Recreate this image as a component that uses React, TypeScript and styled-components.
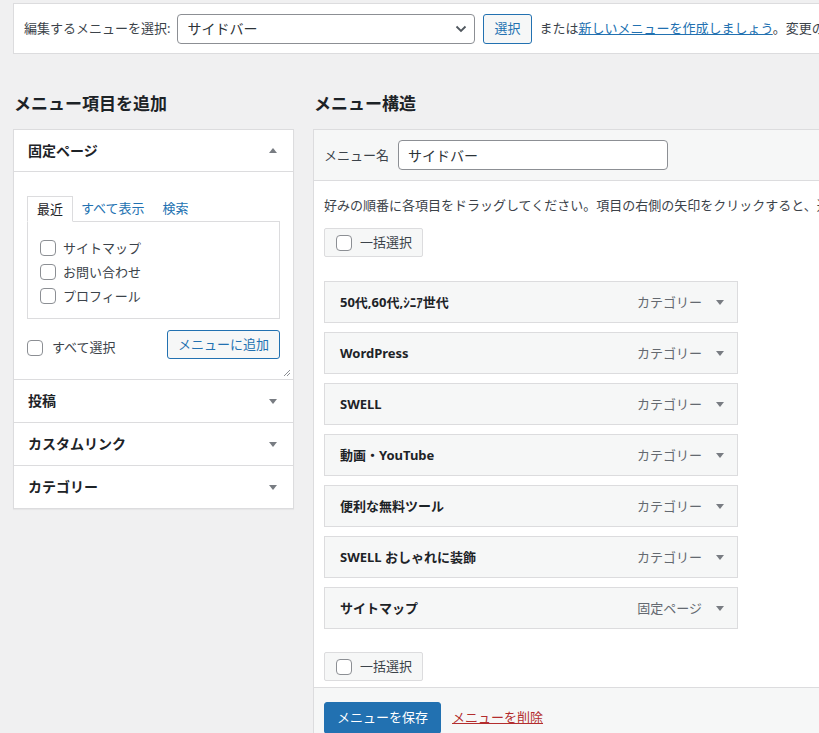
import React from 'react';
import styled, { createGlobalStyle, css } from 'styled-components';

const GlobalStyle = createGlobalStyle`
  html, body {
    margin: 0;
    padding: 0;
    background: #f0f0f1;
    overflow: hidden;
  }
  body {
    font-family: "Noto Sans", "Noto Sans CJK JP", sans-serif;
    font-size: 13px;
    line-height: 1.4;
    color: #3c434a;
  }
  * {
    box-sizing: border-box;
  }
`;

const Page = styled.div`
  width: 1200px;
  padding: 3px 0 0 13px;
`;

const ManageBar = styled.div`
  display: flex;
  align-items: center;
  gap: 8px;
  height: 51px;
  padding: 0 10px;
  background: #fff;
  border: 1px solid #dcdcde;
  white-space: nowrap;
`;

const BarLabel = styled.span`
  margin-right: -1px;
`;

const SelectWrap = styled.div`
  position: relative;
  width: 298px;
  height: 30px;
`;

const Select = styled.select`
  appearance: none;
  width: 100%;
  height: 100%;
  padding: 0 24px 0 9px;
  border: 1px solid #8c8f94;
  border-radius: 4px;
  background: #fff;
  color: #2c3338;
  font: inherit;
  font-size: 14px;
`;

const Chevron = styled.svg`
  position: absolute;
  right: 8px;
  top: 11px;
  pointer-events: none;
`;

const SecondaryButton = styled.button<{ $height?: number }>`
  height: ${(p) => p.$height ?? 30}px;
  padding: 0 10px;
  border: 1px solid #2271b1;
  border-radius: 3px;
  background: #f6f7f7;
  color: #2271b1;
  font: inherit;
  font-size: 13px;
  line-height: 1;
  cursor: pointer;
`;

const Link = styled.a<{ $danger?: boolean }>`
  color: ${(p) => (p.$danger ? '#b32d2e' : '#2271b1')};
  text-decoration: underline;
  cursor: pointer;
`;

const Columns = styled.div`
  display: flex;
  gap: 19px;
  align-items: flex-start;
`;

const LeftColumn = styled.div`
  width: 281px;
  flex: none;
`;

const RightColumn = styled.div`
  width: 800px;
  flex: none;
`;

const Heading = styled.h2`
  margin: 37px 0 12px 1px;
  height: 26px;
  font-size: 17px;
  line-height: 26px;
  font-weight: 700;
  color: #1d2327;
`;

const Accordion = styled.div`
  background: #fff;
  border: 1px solid #dcdcde;
  box-shadow: 0 1px 1px rgba(0, 0, 0, 0.04);
`;

const Section = styled.div<{ $last?: boolean }>`
  ${(p) =>
    !p.$last &&
    css`
      border-bottom: 1px solid #dcdcde;
    `}
`;

const SectionTitle = styled.div<{ $open?: boolean }>`
  display: flex;
  align-items: center;
  justify-content: space-between;
  height: 42px;
  padding: 0 16px 0 14px;
  font-size: 14px;
  font-weight: 700;
  color: #1d2327;
  ${(p) =>
    p.$open &&
    css`
      border-bottom: 1px solid #dcdcde;
    `}
`;

const Triangle = styled.span<{ $up?: boolean }>`
  width: 0;
  height: 0;
  border-left: 4px solid transparent;
  border-right: 4px solid transparent;
  ${(p) =>
    p.$up
      ? css`
          border-bottom: 5px solid #787c82;
        `
      : css`
          border-top: 5px solid #787c82;
        `}
`;

const SectionBody = styled.div`
  position: relative;
  height: 207px;
  padding: 24px 13px 0;
`;

const Tabs = styled.div`
  display: flex;
  height: 25px;
`;

const Tab = styled.span<{ $active?: boolean }>`
  display: flex;
  align-items: center;
  padding: 0 9px;
  color: #2271b1;
  ${(p) =>
    p.$active &&
    css`
      color: #1d2327;
      background: #fff;
      border: 1px solid #dcdcde;
      border-bottom-color: #fff;
      position: relative;
      z-index: 1;
      margin-bottom: -1px;
      margin-right: -1px;
      height: 26px;
    `}
`;

const TabPanel = styled.div`
  height: 98px;
  border: 1px solid #dcdcde;
  padding: 14px 12px 10px;
`;

const CheckRow = styled.label`
  display: flex;
  align-items: center;
  gap: 7px;
  height: 24px;
  color: #3c434a;
`;

const Checkbox = styled.input.attrs({ type: 'checkbox' })`
  appearance: none;
  width: 16px;
  height: 16px;
  margin: 0;
  border: 1px solid #8c8f94;
  border-radius: 4px;
  background: #fff;
  flex: none;
`;

const AddRow = styled.div`
  display: flex;
  align-items: center;
  justify-content: space-between;
  margin-top: 11px;
`;

const SelectAll = styled.label`
  display: flex;
  align-items: center;
  gap: 9px;
  margin-top: 6px;
`;

const ResizeHandle = styled.svg`
  position: absolute;
  right: 2px;
  bottom: 2px;
`;

const Structure = styled.div`
  background: #fff;
  border: 1px solid #dcdcde;
`;

const StructureHeader = styled.div`
  display: flex;
  align-items: center;
  gap: 9px;
  height: 51px;
  padding: 0 10px;
  background: #f6f7f7;
  border-bottom: 1px solid #dcdcde;
`;

const NameInput = styled.input`
  width: 270px;
  height: 30px;
  padding: 0 9px;
  border: 1px solid #8c8f94;
  border-radius: 4px;
  background: #fff;
  color: #2c3338;
  font: inherit;
  font-size: 14px;
`;

const StructureBody = styled.div`
  padding: 0 10px 6px;
`;

const Instructions = styled.p`
  margin: 14px 0 13px;
  line-height: 20px;
  white-space: nowrap;
`;

const BulkBox = styled.label<{ $top?: number }>`
  display: inline-flex;
  align-items: center;
  gap: 8px;
  height: 29px;
  padding: 0 10px 0 11px;
  margin-top: ${(p) => p.$top ?? 0}px;
  background: #f6f7f7;
  border: 1px solid #dcdcde;
  border-radius: 2px;
`;

const ItemList = styled.ul`
  list-style: none;
  margin: 24px 0 0;
  padding: 0;
  display: flex;
  flex-direction: column;
  gap: 9px;
  width: 414px;
`;

const Item = styled.li`
  display: flex;
  align-items: center;
  height: 42px;
  padding: 0 13px 0 15px;
  background: #f6f7f7;
  border: 1px solid #dcdcde;
`;

const ItemTitle = styled.span`
  flex: 1;
  font-weight: 700;
  color: #1d2327;
`;

const ItemType = styled.span`
  color: #646970;
  margin-right: 14px;
`;

const StructureFooter = styled.div`
  display: flex;
  align-items: center;
  gap: 11px;
  padding: 10px;
  height: 60px;
  background: #f6f7f7;
  border-top: 1px solid #dcdcde;
`;

const PrimaryButton = styled.button`
  height: 32px;
  padding: 0 12px;
  border: 1px solid #2271b1;
  border-radius: 3px;
  background: #2271b1;
  color: #fff;
  font: inherit;
  font-size: 13px;
  cursor: pointer;
`;

const pages = ['サイトマップ', 'お問い合わせ', 'プロフィール'];

const menuItems = [
  { title: '50代,60代,ｼﾆｱ世代', type: 'カテゴリー' },
  { title: 'WordPress', type: 'カテゴリー' },
  { title: 'SWELL', type: 'カテゴリー' },
  { title: '動画・YouTube', type: 'カテゴリー' },
  { title: '便利な無料ツール', type: 'カテゴリー' },
  { title: 'SWELL おしゃれに装飾', type: 'カテゴリー' },
  { title: 'サイトマップ', type: '固定ページ' },
];

const closedSections = ['投稿', 'カスタムリンク', 'カテゴリー'];

const App = () => {
  return (
    <>
      <GlobalStyle />
      <Page>
        <ManageBar>
          <BarLabel>編集するメニューを選択:</BarLabel>
          <SelectWrap>
            <Select defaultValue="sidebar">
              <option value="sidebar">サイドバー</option>
            </Select>
            <Chevron width="12" height="8" viewBox="0 0 12 8">
              <path d="M1.5 1.5l4.5 4.5 4.5-4.5" fill="none" stroke="#50575e" strokeWidth="1.8" />
            </Chevron>
          </SelectWrap>
          <SecondaryButton>選択</SecondaryButton>
          <span>
            または<Link>新しいメニューを作成しましょう</Link>。変更の保存をお忘れなく。
          </span>
        </ManageBar>

        <Columns>
          <LeftColumn>
            <Heading>メニュー項目を追加</Heading>
            <Accordion>
              <Section>
                <SectionTitle $open>
                  固定ページ
                  <Triangle $up />
                </SectionTitle>
                <SectionBody>
                  <Tabs>
                    <Tab $active>最近</Tab>
                    <Tab>すべて表示</Tab>
                    <Tab>検索</Tab>
                  </Tabs>
                  <TabPanel>
                    {pages.map((p) => (
                      <CheckRow key={p}>
                        <Checkbox />
                        {p}
                      </CheckRow>
                    ))}
                  </TabPanel>
                  <AddRow>
                    <SelectAll>
                      <Checkbox />
                      すべて選択
                    </SelectAll>
                    <SecondaryButton $height={29}>メニューに追加</SecondaryButton>
                  </AddRow>
                  <ResizeHandle width="8" height="8" viewBox="0 0 8 8">
                    <path d="M7 1L1 7M7 4L4 7" stroke="#8c8f94" strokeWidth="1" />
                  </ResizeHandle>
                </SectionBody>
              </Section>
              {closedSections.map((s, i) => (
                <Section key={s} $last={i === closedSections.length - 1}>
                  <SectionTitle>
                    {s}
                    <Triangle />
                  </SectionTitle>
                </Section>
              ))}
            </Accordion>
          </LeftColumn>

          <RightColumn>
            <Heading>メニュー構造</Heading>
            <Structure>
              <StructureHeader>
                <span>メニュー名</span>
                <NameInput defaultValue="サイドバー" />
              </StructureHeader>
              <StructureBody>
                <Instructions>
                  好みの順番に各項目をドラッグしてください。項目の右側の矢印をクリックすると、追加の設定オプションが表示されます。
                </Instructions>
                <BulkBox>
                  <Checkbox />
                  一括選択
                </BulkBox>
                <ItemList>
                  {menuItems.map((m) => (
                    <Item key={m.title}>
                      <ItemTitle>{m.title}</ItemTitle>
                      <ItemType>{m.type}</ItemType>
                      <Triangle />
                    </Item>
                  ))}
                </ItemList>
                <BulkBox $top={23}>
                  <Checkbox />
                  一括選択
                </BulkBox>
              </StructureBody>
              <StructureFooter>
                <PrimaryButton>メニューを保存</PrimaryButton>
                <Link $danger>メニューを削除</Link>
              </StructureFooter>
            </Structure>
          </RightColumn>
        </Columns>
      </Page>
    </>
  );
};

export default App;
